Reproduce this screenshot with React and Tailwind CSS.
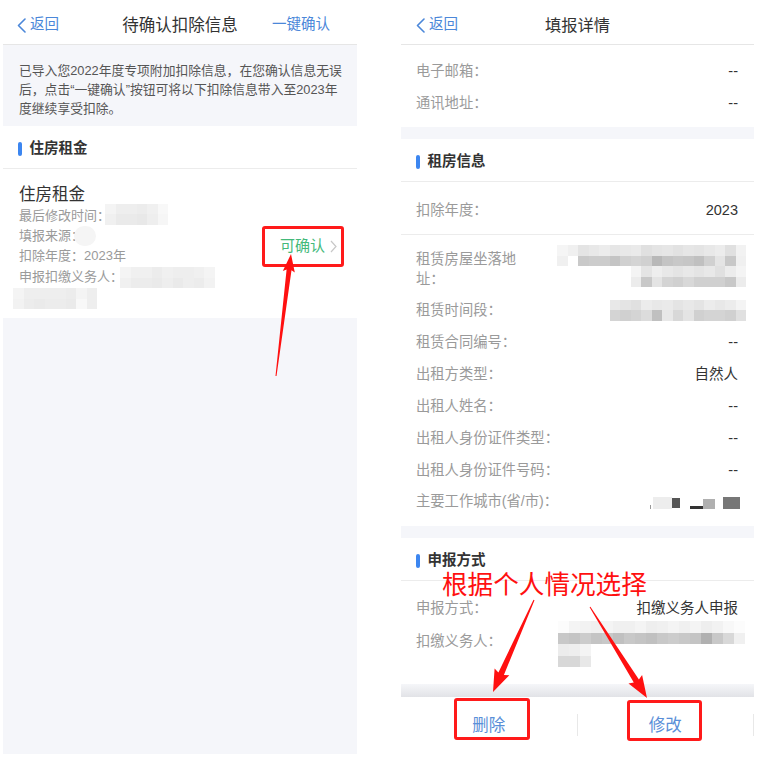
import React from "react";

const BLUE = "#4b87d9";

// mosaic blocks stand in for the blurred personal data
function Mosaic({ rows, big }) {
  const cls = big ? "w-[11px] h-[11.5px]" : "w-[10.5px] h-[10.5px]";
  return (
    <div className="flex flex-col">
      {rows.map((r, i) => (
        <div key={i} className="flex">
          {r.split(" ").map((v, j) => (
            <div
              key={j}
              className={cls}
              style={v === ".." ? undefined : { backgroundColor: `#${v}${v}${v}` }}
            />
          ))}
        </div>
      ))}
    </div>
  );
}

function Back({ pad }) {
  return (
    <div className={`flex items-center gap-[4px] justify-self-start ${pad}`}>
      <svg width="9" height="15" viewBox="0 0 9 15">
        <path d="M8 1 L1.5 7.5 L8 14" fill="none" stroke={BLUE} strokeWidth="1.6" strokeLinecap="round" strokeLinejoin="round" />
      </svg>
      <span className="text-[14.5px] text-[#4b87d9]">返回</span>
    </div>
  );
}

function SectionTitle({ children, pad }) {
  return (
    <div className={`flex items-center gap-[8px] border-b border-[#ececec] ${pad}`}>
      <div className="w-[3.5px] h-[14px] rounded-full bg-[#3c86f0]" />
      <span className="text-[14.5px] font-bold text-[#333]">{children}</span>
    </div>
  );
}

function Row({ label, value }) {
  return (
    <div className="flex items-center justify-between h-[32px] pt-[4px]">
      <span className="text-[14.3px] text-[#9a9a9a]">{label}</span>
      <span className="text-[14.5px] text-[#333]">{value}</span>
    </div>
  );
}

function arrow(tx, ty, hx, hy, headLen, headHalf, shaftHalf) {
  const dx = hx - tx;
  const dy = hy - ty;
  const l = Math.hypot(dx, dy);
  const ux = dx / l;
  const uy = dy / l;
  const nx = -uy;
  const ny = ux;
  const bx = hx - ux * headLen;
  const by = hy - uy * headLen;
  const p = (x, y) => `${x.toFixed(1)},${y.toFixed(1)}`;
  return [
    p(tx + nx * 0.5, ty + ny * 0.5),
    p(bx + nx * shaftHalf, by + ny * shaftHalf),
    p(bx + nx * headHalf - ux * 2, by + ny * headHalf - uy * 2),
    p(hx, hy),
    p(bx - nx * headHalf - ux * 2, by - ny * headHalf - uy * 2),
    p(bx - nx * shaftHalf, by - ny * shaftHalf),
    p(tx - nx * 0.5, ty - ny * 0.5),
  ].join(" ");
}

function LeftPanel() {
  return (
    <div className="ml-[3px] w-[354px] h-[754px] flex flex-col">
      <div className="h-[45px] pt-[6px] grid grid-cols-[1fr_auto_1fr] items-center border-b border-[#e6e6e6]">
        <Back pad="pl-[14px]" />
        <span className="text-[16.5px] text-[#333]">待确认扣除信息</span>
        <span className="justify-self-end pr-[27px] text-[14.5px] text-[#4b87d9]">一键确认</span>
      </div>

      <div className="bg-[#f5f6fa] px-[16px] pt-[16px] pb-[8px] text-[12.8px] leading-[19px] text-[#555] whitespace-nowrap">
        已导入您2022年度专项附加扣除信息，在您确认信息无误
        <br />
        后，点击“一键确认”按钮可将以下扣除信息带入至2023年
        <br />
        度继续享受扣除。
      </div>

      <SectionTitle pad="h-[43px] pt-[3px] pl-[15px]">住房租金</SectionTitle>

      <div className="h-[149px] flex justify-between items-center pl-[16px] pr-[20px]">
        <div className="self-start pt-[14px] flex flex-col">
          <div className="h-[22px] leading-[22px] text-[16.5px] text-[#333]">住房租金</div>
          <div className="text-[13px] text-[#9a9a9a]">
            <div className="h-[20.5px] flex items-center">
              最后修改时间：
              <div className="ml-[-5px] -mt-[2px]">
                <Mosaic rows={["f4 ee ee ec f0 f8", "f0 ea ea e8 ee f6"]} />
              </div>
            </div>
            <div className="h-[20.5px] flex items-center">
              填报来源：
              <div className="ml-[-10px] w-[22px] h-[20px] rounded-full bg-[#f5f5f5]" />
            </div>
            <div className="h-[20.5px] leading-[20.5px]">扣除年度：2023年</div>
            <div className="h-[20.5px] flex items-center">
              申报扣缴义务人：
              <div className="ml-[-3px] mt-[2px]">
                <Mosaic rows={["f4 f0 f0 ec f0 ee ee f0 f4", "f0 ec ec ea ee ea ee ec f2"]} />
              </div>
            </div>
            <div className="ml-[-6px] mt-[1px]">
              <Mosaic rows={["f4 ee ee ee ee ec f4 ee ff", "f2 ec ea ec ec ea f8 ee ff"]} />
            </div>
          </div>
        </div>
        <div className="flex items-center gap-[5px] pt-[5px]">
          <span className="text-[15px] text-[#43b97a]">可确认</span>
          <svg width="7" height="13" viewBox="0 0 7 13">
            <path d="M1 1 L6 6.5 L1 12" fill="none" stroke="#c8c8c8" strokeWidth="1.2" />
          </svg>
        </div>
      </div>

      <div className="flex-1 bg-[#f5f6fa]" />
    </div>
  );
}

function RightPanel() {
  return (
    <div className="ml-[44px] w-[353px] h-[768px] flex flex-col">
      <div className="h-[45px] pt-[6px] grid grid-cols-[1fr_auto_1fr] items-center border-b border-[#e6e6e6]">
        <Back pad="pl-[15px]" />
        <span className="text-[16.3px] text-[#333]">填报详情</span>
        <span />
      </div>

      <div className="pl-[15px] pr-[16px] pt-[9px] pb-[9px]">
        <Row label="电子邮箱：" value="--" />
        <Row label="通讯地址：" value="--" />
      </div>

      <div className="h-[12px] bg-[#f5f6fa]" />
      <SectionTitle pad="h-[43px] pt-[4px] pl-[15px]">租房信息</SectionTitle>

      <div className="h-[53px] pt-[5px] flex items-center justify-between pl-[15px] pr-[16px] border-b border-[#ececec]">
        <span className="text-[14.3px] text-[#9a9a9a]">扣除年度：</span>
        <span className="text-[14.5px] text-[#333]">2023</span>
      </div>

      <div className="pl-[15px] pr-[8px] pt-[8px] pb-[9px]">
        <div className="h-[50px] flex items-start justify-between">
          <span className="pt-[6px] text-[14.3px] leading-[20px] text-[#9a9a9a]">
            租赁房屋坐落地
            <br />
            址：
          </span>
          <div className="mt-[2px]">
            <Mosaic
              rows={[
                "f5 f0 e4 e8 ec e6 e8 ea e0 e4 e6 e2 e6 e4 e8 ec e0 f2",
                "f0 ff c9 cc cc c4 d0 d4 d0 b8 c4 c8 c6 c0 d0 e4 c8 f0",
                ".. .. .. .. .. .. .. f4 e4 ee e8 e4 e8 e4 e8 e0 ec f4",
                ".. .. .. .. .. .. .. ec c8 e4 d4 d0 d8 d0 d0 d0 c8 ec",
              ]}
            />
          </div>
        </div>
        <div className="flex items-center justify-between h-[32px] pt-[4px]">
          <span className="text-[14.3px] text-[#9a9a9a]">租赁时间段：</span>
          <div className="-mt-[2px]">
            <Mosaic
              rows={[
                "e8 e4 e0 ec e8 ea e4 e8 e4 ec e8 ec f4",
                "d4 d0 d4 dc c0 e8 d8 e4 d0 d4 d4 d0 e0",
              ]}
            />
          </div>
        </div>
        <div className="pr-[8px]">
          <Row label="租赁合同编号：" value="--" />
          <Row label="出租方类型：" value="自然人" />
          <Row label="出租人姓名：" value="--" />
          <Row label="出租人身份证件类型：" value="--" />
          <Row label="出租人身份证件号码：" value="--" />
        </div>
        <div className="flex items-center justify-between h-[32px] pt-[2px] pr-[6px]">
          <span className="text-[14.3px] text-[#9a9a9a]">主要工作城市(省/市)：</span>
          <div className="flex items-end h-[13px]">
            <div className="w-[1px] h-[4px] bg-[#999]" />
            <div className="ml-[2px] w-[19px] h-[12px] bg-[#ededed]" />
            <div className="w-[8px] h-[10px] mb-[1px] bg-[#555]" />
            <div className="ml-[10px] w-[13px] h-[3px] bg-[#333]" />
            <div className="w-[12px] h-[10px] bg-[#b0b0b0]" />
            <div className="ml-[8px] w-[17px] h-[12px] bg-[#777]" />
          </div>
        </div>
      </div>

      <div className="h-[12px] bg-[#f5f6fa]" />
      <SectionTitle pad="h-[43px] pt-[4px] pl-[15px]">申报方式</SectionTitle>

      <div className="pl-[15px] pr-[16px] pt-[10px] pb-[15px]">
        <Row label="申报方式：" value="扣缴义务人申报" />
        <div className="h-[46px] flex items-start justify-between">
          <span className="h-[32px] pt-[4px] leading-[28px] text-[14.3px] text-[#9a9a9a]">扣缴义务人：</span>
          <div className="-mt-[2px] -mr-[7px]">
            <Mosaic
              big
              rows={[
                "fc f4 f2 f0 f4 f0 f0 f4 ee f0 f4 f0 f4 ee f2 f8 fc",
                "c8 c4 cc c4 c8 c0 c8 c4 c0 c8 cc c8 c4 b0 c8 d8 f0",
                "ec ee f4 .. .. .. .. .. .. .. .. .. .. .. .. .. ..",
                "d8 d8 e8 .. .. .. .. .. .. .. .. .. .. .. .. .. ..",
              ]}
            />
          </div>
        </div>
      </div>

      <div className="h-[13px] bg-linear-to-b from-[#f5f6f9] to-[#e2e3e7]" />

      <div className="h-[52px] pt-[4px] flex items-center">
        <div className="flex-1 flex justify-center text-[16.5px] text-[#5a8fd8]">删除</div>
        <div className="w-px h-[22px] bg-[#e8e8e8]" />
        <div className="flex-1 flex justify-center text-[16.5px] text-[#5a8fd8]">修改</div>
        <div className="w-px h-[22px] bg-[#e8e8e8]" />
      </div>
    </div>
  );
}

export default function App() {
  return (
    <div className="relative w-[765px] h-[768px] overflow-hidden bg-white flex font-['Liberation_Sans','Noto_Sans_CJK_SC',sans-serif]">
      <LeftPanel />
      <RightPanel />

      {/* red annotations */}
      <div className="absolute left-[262px] top-[226px] w-[82px] h-[41px] border-[3px] border-[#ff1a1a] rounded-[3px]" />
      <div className="absolute left-[454px] top-[698px] w-[76px] h-[42px] border-[3px] border-[#ff1a1a] rounded-[3px]" />
      <div className="absolute left-[627px] top-[700px] w-[75px] h-[41px] border-[3px] border-[#ff1a1a] rounded-[3px]" />
      <div className="absolute left-[442px] top-[571px] text-[25.6px] leading-[24px] text-[#ff1010] whitespace-nowrap font-['Noto_Sans_CJK_SC',sans-serif]">
        根据个人情况选择
      </div>
      <svg className="absolute left-0 top-0 pointer-events-none" width="765" height="768">
        <polygon points={arrow(276, 376, 291, 254, 16, 6, 2.5)} fill="#ff1010" />
        <polygon points={arrow(534, 600, 493, 692, 20, 8, 3)} fill="#ff1010" />
        <polygon points={arrow(590, 607, 647, 698, 20, 8, 3)} fill="#ff1010" />
      </svg>
    </div>
  );
}
